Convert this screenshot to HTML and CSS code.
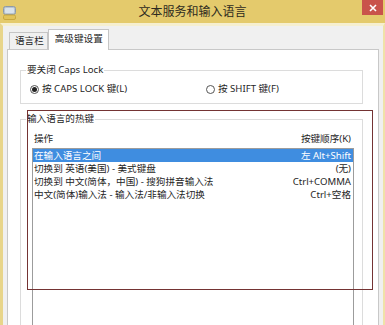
FILE: index.html
```html
<!DOCTYPE html>
<html lang="zh-CN">
<head>
<meta charset="utf-8">
<title>文本服务和输入语言</title>
<link rel="stylesheet" href="styles.css">
</head>
<body>
<div class="window">
  <div class="titlebar">
    <svg class="app-icon" width="13" height="14" viewBox="0 0 13 14">
      <rect x="0.5" y="0.5" width="12" height="8" rx="2" fill="#b8c4cf" stroke="#8e9aa6"/>
      <rect x="2" y="2" width="9" height="5" rx="1" fill="#d9e3ec"/>
      <rect x="0.5" y="9" width="12" height="4.5" rx="1.5" fill="#e2c45a" stroke="#c9a83f"/>
    </svg>
    <div class="title">文本服务和输入语言</div>
    <div class="close">
      <svg width="8" height="8" viewBox="0 0 8 8"><path d="M1 1L7 7M7 1L1 7" stroke="#fff" stroke-width="1.6"/></svg>
    </div>
  </div>
  <div class="frame">
    <div class="tabs">
      <div class="tab">语言栏</div>
      <div class="tab active">高级键设置</div>
    </div>
    <div class="panel">
      <fieldset class="group caps">
        <legend>要关闭 Caps Lock</legend>
        <div class="radios">
          <div class="radio"><span class="dot checked"></span>按 CAPS LOCK 键(L)</div>
          <div class="radio"><span class="dot"></span>按 SHIFT 键(F)</div>
        </div>
      </fieldset>
      <fieldset class="group hotkeys">
        <legend>输入语言的热键</legend>
        <div class="hotkeys-body">
          <div class="list-head"><span>操作</span><span>按键顺序(K)</span></div>
          <div class="listbox">
            <div class="row selected"><span>在输入语言之间</span><span>左 Alt+Shift</span></div>
            <div class="row"><span>切换到 英语(美国) - 美式键盘</span><span>(无)</span></div>
            <div class="row"><span>切换到 中文(简体，中国) - 搜狗拼音输入法</span><span>Ctrl+COMMA</span></div>
            <div class="row"><span>中文(简体)输入法 - 输入法/非输入法切换</span><span>Ctrl+空格</span></div>
          </div>
        </div>
      </fieldset>
    </div>
  </div>
  <div class="annotation"></div>
</div>
</body>
</html>
```
FILE: styles.css
```css
* { box-sizing: border-box; }

html, body {
  margin: 0;
  padding: 0;
}

body {
  width: 385px;
  height: 325px;
  overflow: hidden;
  font-family: "Noto Sans", "Noto Sans CJK SC", sans-serif;
  font-size: 9.6px;
  color: #262626;
  background: #f0f0f0;
}

.window {
  position: relative;
  width: 385px;
  height: 325px;
  display: flex;
  flex-direction: column;
}

.titlebar {
  height: 23px;
  flex: none;
  background: #e4ca6c;
  display: grid;
  grid-template-columns: 1fr auto 1fr;
  align-items: center;
}

.app-icon {
  justify-self: start;
  margin-left: 3px;
  margin-top: 2px;
}

.title {
  font-size: 12px;
  line-height: 16px;
  color: #2e2a20;
}

.close {
  justify-self: end;
  align-self: start;
  width: 21px;
  height: 15px;
  margin-right: 2px;
  background: #c9534b;
  display: flex;
  align-items: center;
  justify-content: center;
}

.frame {
  flex: 1;
  display: flex;
  flex-direction: column;
  border-left: 3px solid #e8d58a;
  border-right: 2px solid #efe2a8;
  border-top: 3px solid #f6efcf;
  background: #f0f0f0;
}

.tabs {
  display: flex;
  align-items: flex-end;
  padding-left: 6px;
  padding-top: 3px;
  position: relative;
  z-index: 1;
}

.tab {
  height: 17px;
  padding: 0 3px 0 5px;
  border: 1px solid #c5c5c5;
  border-bottom: none;
  background: #f0f0f0;
  line-height: 16px;
  color: #262626;
}

.tab.active {
  height: 21px;
  margin-bottom: -1px;
  padding: 0 5px 0 6px;
  background: #fff;
  line-height: 17px;
}

.panel {
  flex: 1;
  margin: 0 4px 0 4px;
  border: 1px solid #c8c8c8;
  border-bottom: none;
  background: #fff;
  padding: 14px 15px 0 12px;
}

.group {
  margin: 0;
  padding: 0;
  border: 1px solid #dcdcdc;
  min-width: 0;
}

.group legend {
  padding: 0 1px;
  margin-left: 5px;
  line-height: 12px;
}

.radios {
  display: grid;
  grid-template-columns: 176px auto;
  padding: 7px 8px 8px 9px;
}

.radio {
  display: flex;
  align-items: center;
  line-height: 12px;
  height: 12px;
}

.dot {
  width: 9px;
  height: 9px;
  border: 1px solid #555;
  border-radius: 50%;
  margin-right: 3px;
  display: flex;
  align-items: center;
  justify-content: center;
  background: #fff;
}

.dot.checked::after {
  content: "";
  width: 5px;
  height: 5px;
  border-radius: 50%;
  background: #222;
}

.hotkeys {
  margin-top: 9px;
  height: 260px;
}

.hotkeys-body {
  padding: 8px 8px 0 11px;
}

.list-head {
  display: flex;
  justify-content: space-between;
  line-height: 12px;
  padding: 0 3px 0 2px;
  margin-bottom: 3px;
  white-space: nowrap;
}

.listbox {
  border: 1px solid #9c9c9c;
  height: 200px;
}

.row {
  display: flex;
  justify-content: space-between;
  height: 13px;
  line-height: 13px;
  padding: 0 2px 0 1px;
  white-space: nowrap;
}

.row.selected {
  background: #3f8de0;
  color: #fff;
}

.annotation {
  position: absolute;
  left: 27px;
  top: 110px;
  width: 346px;
  height: 180px;
  border: 1px solid #743333;
  pointer-events: none;
}
```
